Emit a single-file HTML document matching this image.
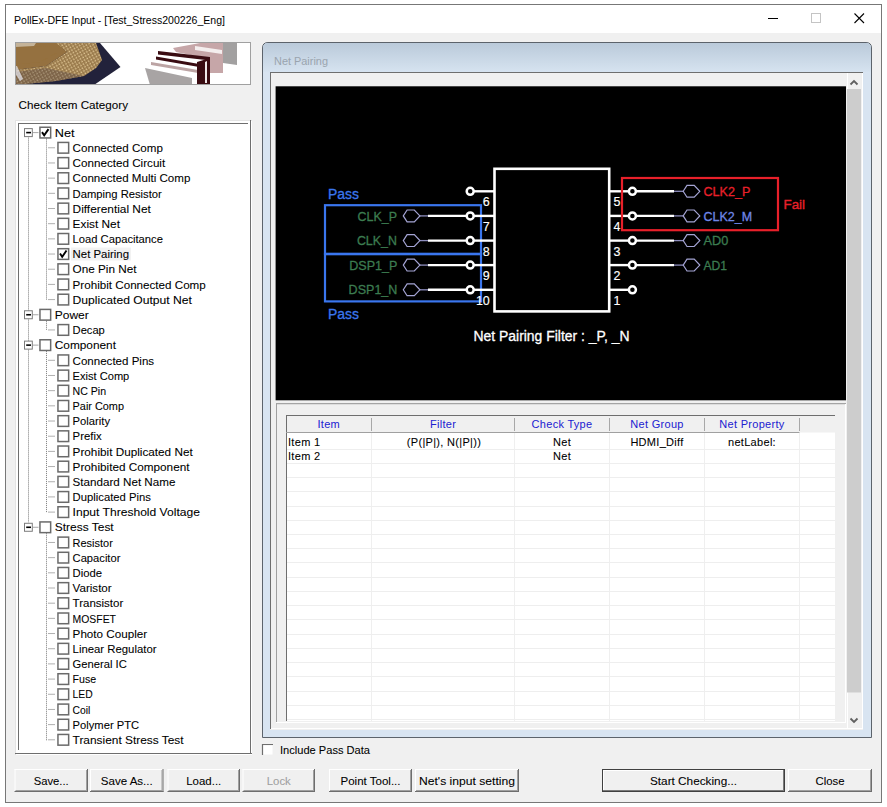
<!DOCTYPE html>
<html><head><meta charset="utf-8"><style>html,body{margin:0;padding:0;background:#fff;width:887px;height:807px;overflow:hidden}svg{display:block}text{font-family:"Liberation Sans", sans-serif}</style></head>
<body>
<svg width="887" height="807" viewBox="0 0 887 807" font-family='"Liberation Sans", sans-serif'>
<rect x="0" y="0" width="887" height="807" fill="#ffffff" />
<rect x="5" y="4" width="877" height="799" fill="#f0f0f0" />
<rect x="5" y="4" width="877" height="29" fill="#ffffff" />
<rect x="5.5" y="4.5" width="876" height="798" fill="none" stroke="#777777" stroke-width="1" />
<text x="14" y="23.6" font-size="11.6" fill="#000" text-anchor="start" textLength="211" lengthAdjust="spacingAndGlyphs" >PollEx-DFE Input - [Test_Stress200226_Eng]</text>
<line x1="768" y1="18.5" x2="778" y2="18.5" stroke="#000" stroke-width="1" />
<rect x="811.5" y="13.5" width="9" height="9" fill="none" stroke="#c4c4c4" stroke-width="1" />
<line x1="854.5" y1="13.5" x2="864" y2="23" stroke="#000" stroke-width="1.1" />
<line x1="864" y1="13.5" x2="854.5" y2="23" stroke="#000" stroke-width="1.1" />
<defs><pattern id="pins" x="0" y="0" width="3" height="3" patternUnits="userSpaceOnUse" patternTransform="rotate(-30)"><rect width="3" height="3" fill="#8a6c44"/><rect x="0.5" y="0.5" width="1.5" height="1.6" fill="#f0dcae"/></pattern><pattern id="pins2" x="0" y="0" width="3.2" height="3.2" patternUnits="userSpaceOnUse" patternTransform="rotate(35)"><rect width="3.2" height="3.2" fill="#3a3650"/><rect x="0.6" y="0.6" width="1.5" height="1.5" fill="#c8b8a0"/></pattern><filter id="bl" x="-5%" y="-5%" width="110%" height="110%"><feGaussianBlur stdDeviation="0.4"/></filter></defs>
<g>
<rect x="15" y="42" width="236" height="43" fill="#ffffff" />
<g filter="url(#bl)">
<polygon points="15,43 100,43 120.5,67 94,85 15,85" fill="#23233a"/>
<polygon points="55,43 96,43 102,60 96,68 84,76 56,81 15,85 15,70 46,66 67,52" fill="url(#pins)"/>
<polygon points="55,43 96,43 102,60 96,68 84,76 56,81 15,85 15,70 46,66 67,52" fill="#b89458" opacity="0.3"/>
<polygon points="15,72 46,68 84,76 56,81 15,85" fill="#383040" opacity="0.3"/>
<polygon points="15,43 56,43 67,52 46,66 15,70" fill="#95713f"/>
<polygon points="20,48 50,46 58,52 40,62 20,64" fill="#96723f" opacity="0.6"/>
<polygon points="15,43 36,43 34,46 15,47" fill="#d8d0c0" opacity="0.7"/>
<polygon points="15,66 17,66 23,79 20,81 15,73" fill="#e0e0e8" opacity="0.75"/>
</g>
<polygon points="173,48 200,43 223,43 223,73 210,73 210,59 176,52" fill="#c6a6a8"/>
<polygon points="195,46 222,50 222,54 195,50" fill="#f4eeee"/>
<polygon points="223,43 237,43 237,65 223,63" fill="#a2a0a0"/>
<polygon points="145,68 192,78 192,85 150,85" fill="#a8a4a4"/>
<polygon points="151,62 198,70 198,73 151,65" fill="#bca4a4"/>
<polygon points="156,56.5 202,64.5 202,67.5 156,59.5" fill="#3a0c12"/>
<polygon points="158,51 210,57 210,60.5 158,54.5" fill="#3a0c12"/>
<polygon points="197,62 210,58 210,85 197,85" fill="#3a0c12"/>
<polygon points="205,62 207,61 207,83 205,83" fill="#f0e8e8"/>
<rect x="15.5" y="42.5" width="235" height="42" fill="none" stroke="#a0a0a0" stroke-width="1" />
</g>
<text x="18.5" y="109" font-size="11" fill="#000" text-anchor="start" textLength="109.5" lengthAdjust="spacingAndGlyphs" stroke="#000" stroke-width="0.07">Check Item Category</text>
<rect x="15" y="120" width="237" height="635" fill="#ffffff" />
<line x1="15" y1="120.5" x2="252" y2="120.5" stroke="#e3e3e3" stroke-width="1" />
<line x1="15.5" y1="120" x2="15.5" y2="755" stroke="#e3e3e3" stroke-width="1" />
<line x1="15" y1="753.5" x2="252" y2="753.5" stroke="#6e6e6e" stroke-width="1" />
<line x1="250.5" y1="120" x2="250.5" y2="754" stroke="#6e6e6e" stroke-width="1" />
<line x1="18" y1="123.5" x2="248" y2="123.5" stroke="#6e6e6e" stroke-width="1" />
<line x1="18.5" y1="123" x2="18.5" y2="750" stroke="#6e6e6e" stroke-width="1" />
<line x1="28.5" y1="137.6" x2="28.5" y2="522.28" stroke="#7a7a7a" stroke-width="1" stroke-dasharray="1,1"/>
<line x1="46.5" y1="138.6" x2="46.5" y2="300.08" stroke="#7a7a7a" stroke-width="1" stroke-dasharray="1,1"/>
<line x1="46.5" y1="320.76" x2="46.5" y2="330.44" stroke="#7a7a7a" stroke-width="1" stroke-dasharray="1,1"/>
<line x1="46.5" y1="351.12" x2="46.5" y2="512.6" stroke="#7a7a7a" stroke-width="1" stroke-dasharray="1,1"/>
<line x1="46.5" y1="533.28" x2="46.5" y2="740.3000000000001" stroke="#7a7a7a" stroke-width="1" stroke-dasharray="1,1"/>
<rect x="24.5" y="128.6" width="7.8" height="8" fill="#ffffff" stroke="#7c7c7c" stroke-width="1" />
<line x1="26.2" y1="132.6" x2="31" y2="132.6" stroke="#000" stroke-width="1.6" />
<line x1="33" y1="132.6" x2="38.5" y2="132.6" stroke="#a8a8a8" stroke-width="1" />
<rect x="39.95" y="127.25" width="10.7" height="10.7" fill="#ffffff" stroke="#6a6a6a" stroke-width="1.5" />
<polyline points="42.0,132.1 44.2,135.4 48.5,129.1" fill="none" stroke="#000" stroke-width="1.9"/>
<text x="54.8" y="136.79999999999998" font-size="11" fill="#000" text-anchor="start" textLength="19.8" lengthAdjust="spacingAndGlyphs" stroke="#000" stroke-width="0.07">Net</text>
<line x1="48" y1="147.78" x2="55" y2="147.78" stroke="#b0b0b0" stroke-width="1" />
<rect x="57.95" y="142.43" width="10.7" height="10.7" fill="#ffffff" stroke="#6a6a6a" stroke-width="1.5" />
<text x="72.6" y="151.98" font-size="11" fill="#000" text-anchor="start" textLength="90.3" lengthAdjust="spacingAndGlyphs" stroke="#000" stroke-width="0.07">Connected Comp</text>
<line x1="48" y1="162.95999999999998" x2="55" y2="162.95999999999998" stroke="#b0b0b0" stroke-width="1" />
<rect x="57.95" y="157.60999999999999" width="10.7" height="10.7" fill="#ffffff" stroke="#6a6a6a" stroke-width="1.5" />
<text x="72.6" y="167.15999999999997" font-size="11" fill="#000" text-anchor="start" textLength="92.6" lengthAdjust="spacingAndGlyphs" stroke="#000" stroke-width="0.07">Connected Circuit</text>
<line x1="48" y1="178.14" x2="55" y2="178.14" stroke="#b0b0b0" stroke-width="1" />
<rect x="57.95" y="172.79" width="10.7" height="10.7" fill="#ffffff" stroke="#6a6a6a" stroke-width="1.5" />
<text x="72.6" y="182.33999999999997" font-size="11" fill="#000" text-anchor="start" textLength="117.8" lengthAdjust="spacingAndGlyphs" stroke="#000" stroke-width="0.07">Connected Multi Comp</text>
<line x1="48" y1="193.32" x2="55" y2="193.32" stroke="#b0b0b0" stroke-width="1" />
<rect x="57.95" y="187.97" width="10.7" height="10.7" fill="#ffffff" stroke="#6a6a6a" stroke-width="1.5" />
<text x="72.6" y="197.51999999999998" font-size="11" fill="#000" text-anchor="start" textLength="89.2" lengthAdjust="spacingAndGlyphs" stroke="#000" stroke-width="0.07">Damping Resistor</text>
<line x1="48" y1="208.5" x2="55" y2="208.5" stroke="#b0b0b0" stroke-width="1" />
<rect x="57.95" y="203.15" width="10.7" height="10.7" fill="#ffffff" stroke="#6a6a6a" stroke-width="1.5" />
<text x="72.6" y="212.7" font-size="11" fill="#000" text-anchor="start" textLength="78.2" lengthAdjust="spacingAndGlyphs" stroke="#000" stroke-width="0.07">Differential Net</text>
<line x1="48" y1="223.68" x2="55" y2="223.68" stroke="#b0b0b0" stroke-width="1" />
<rect x="57.95" y="218.33" width="10.7" height="10.7" fill="#ffffff" stroke="#6a6a6a" stroke-width="1.5" />
<text x="72.6" y="227.88" font-size="11" fill="#000" text-anchor="start" textLength="47.4" lengthAdjust="spacingAndGlyphs" stroke="#000" stroke-width="0.07">Exist Net</text>
<line x1="48" y1="238.85999999999999" x2="55" y2="238.85999999999999" stroke="#b0b0b0" stroke-width="1" />
<rect x="57.95" y="233.51" width="10.7" height="10.7" fill="#ffffff" stroke="#6a6a6a" stroke-width="1.5" />
<text x="72.6" y="243.05999999999997" font-size="11" fill="#000" text-anchor="start" textLength="90.3" lengthAdjust="spacingAndGlyphs" stroke="#000" stroke-width="0.07">Load Capacitance</text>
<line x1="48" y1="254.04" x2="55" y2="254.04" stroke="#b0b0b0" stroke-width="1" />
<rect x="71" y="247.54" width="60" height="13" fill="#f2f2f2" />
<rect x="57.95" y="248.69" width="10.7" height="10.7" fill="#ffffff" stroke="#6a6a6a" stroke-width="1.5" />
<polyline points="60.0,253.54 62.2,256.84 66.5,250.54" fill="none" stroke="#000" stroke-width="1.9"/>
<text x="72.6" y="258.24" font-size="11" fill="#000" text-anchor="start" textLength="56.4" lengthAdjust="spacingAndGlyphs" stroke="#000" stroke-width="0.07">Net Pairing</text>
<line x1="48" y1="269.22" x2="55" y2="269.22" stroke="#b0b0b0" stroke-width="1" />
<rect x="57.95" y="263.87" width="10.7" height="10.7" fill="#ffffff" stroke="#6a6a6a" stroke-width="1.5" />
<text x="72.6" y="273.42" font-size="11" fill="#000" text-anchor="start" textLength="63.9" lengthAdjust="spacingAndGlyphs" stroke="#000" stroke-width="0.07">One Pin Net</text>
<line x1="48" y1="284.4" x2="55" y2="284.4" stroke="#b0b0b0" stroke-width="1" />
<rect x="57.95" y="279.04999999999995" width="10.7" height="10.7" fill="#ffffff" stroke="#6a6a6a" stroke-width="1.5" />
<text x="72.6" y="288.59999999999997" font-size="11" fill="#000" text-anchor="start" textLength="133.2" lengthAdjust="spacingAndGlyphs" stroke="#000" stroke-width="0.07">Prohibit Connected Comp</text>
<line x1="48" y1="299.58" x2="55" y2="299.58" stroke="#b0b0b0" stroke-width="1" />
<rect x="57.95" y="294.22999999999996" width="10.7" height="10.7" fill="#ffffff" stroke="#6a6a6a" stroke-width="1.5" />
<text x="72.6" y="303.78" font-size="11" fill="#000" text-anchor="start" textLength="119.4" lengthAdjust="spacingAndGlyphs" stroke="#000" stroke-width="0.07">Duplicated Output Net</text>
<rect x="24.5" y="310.76" width="7.8" height="8" fill="#ffffff" stroke="#7c7c7c" stroke-width="1" />
<line x1="26.2" y1="314.76" x2="31" y2="314.76" stroke="#000" stroke-width="1.6" />
<line x1="33" y1="314.76" x2="38.5" y2="314.76" stroke="#a8a8a8" stroke-width="1" />
<rect x="39.95" y="309.40999999999997" width="10.7" height="10.7" fill="#ffffff" stroke="#6a6a6a" stroke-width="1.5" />
<text x="54.8" y="318.96" font-size="11" fill="#000" text-anchor="start" textLength="34.0" lengthAdjust="spacingAndGlyphs" stroke="#000" stroke-width="0.07">Power</text>
<line x1="48" y1="329.94" x2="55" y2="329.94" stroke="#b0b0b0" stroke-width="1" />
<rect x="57.95" y="324.59" width="10.7" height="10.7" fill="#ffffff" stroke="#6a6a6a" stroke-width="1.5" />
<text x="72.6" y="334.14" font-size="11" fill="#000" text-anchor="start" textLength="32.2" lengthAdjust="spacingAndGlyphs" stroke="#000" stroke-width="0.07">Decap</text>
<rect x="24.5" y="341.12" width="7.8" height="8" fill="#ffffff" stroke="#7c7c7c" stroke-width="1" />
<line x1="26.2" y1="345.12" x2="31" y2="345.12" stroke="#000" stroke-width="1.6" />
<line x1="33" y1="345.12" x2="38.5" y2="345.12" stroke="#a8a8a8" stroke-width="1" />
<rect x="39.95" y="339.77" width="10.7" height="10.7" fill="#ffffff" stroke="#6a6a6a" stroke-width="1.5" />
<text x="54.8" y="349.32" font-size="11" fill="#000" text-anchor="start" textLength="61.2" lengthAdjust="spacingAndGlyphs" stroke="#000" stroke-width="0.07">Component</text>
<line x1="48" y1="360.29999999999995" x2="55" y2="360.29999999999995" stroke="#b0b0b0" stroke-width="1" />
<rect x="57.95" y="354.94999999999993" width="10.7" height="10.7" fill="#ffffff" stroke="#6a6a6a" stroke-width="1.5" />
<text x="72.6" y="364.49999999999994" font-size="11" fill="#000" text-anchor="start" textLength="81.5" lengthAdjust="spacingAndGlyphs" stroke="#000" stroke-width="0.07">Connected Pins</text>
<line x1="48" y1="375.48" x2="55" y2="375.48" stroke="#b0b0b0" stroke-width="1" />
<rect x="57.95" y="370.13" width="10.7" height="10.7" fill="#ffffff" stroke="#6a6a6a" stroke-width="1.5" />
<text x="72.6" y="379.68" font-size="11" fill="#000" text-anchor="start" textLength="56.7" lengthAdjust="spacingAndGlyphs" stroke="#000" stroke-width="0.07">Exist Comp</text>
<line x1="48" y1="390.65999999999997" x2="55" y2="390.65999999999997" stroke="#b0b0b0" stroke-width="1" />
<rect x="57.95" y="385.30999999999995" width="10.7" height="10.7" fill="#ffffff" stroke="#6a6a6a" stroke-width="1.5" />
<text x="72.6" y="394.85999999999996" font-size="11" fill="#000" text-anchor="start" textLength="33.5" lengthAdjust="spacingAndGlyphs" stroke="#000" stroke-width="0.07">NC Pin</text>
<line x1="48" y1="405.84000000000003" x2="55" y2="405.84000000000003" stroke="#b0b0b0" stroke-width="1" />
<rect x="57.95" y="400.49" width="10.7" height="10.7" fill="#ffffff" stroke="#6a6a6a" stroke-width="1.5" />
<text x="72.6" y="410.04" font-size="11" fill="#000" text-anchor="start" textLength="51.4" lengthAdjust="spacingAndGlyphs" stroke="#000" stroke-width="0.07">Pair Comp</text>
<line x1="48" y1="421.02" x2="55" y2="421.02" stroke="#b0b0b0" stroke-width="1" />
<rect x="57.95" y="415.66999999999996" width="10.7" height="10.7" fill="#ffffff" stroke="#6a6a6a" stroke-width="1.5" />
<text x="72.6" y="425.21999999999997" font-size="11" fill="#000" text-anchor="start" textLength="37.5" lengthAdjust="spacingAndGlyphs" stroke="#000" stroke-width="0.07">Polarity</text>
<line x1="48" y1="436.20000000000005" x2="55" y2="436.20000000000005" stroke="#b0b0b0" stroke-width="1" />
<rect x="57.95" y="430.85" width="10.7" height="10.7" fill="#ffffff" stroke="#6a6a6a" stroke-width="1.5" />
<text x="72.6" y="440.40000000000003" font-size="11" fill="#000" text-anchor="start" textLength="29.0" lengthAdjust="spacingAndGlyphs" stroke="#000" stroke-width="0.07">Prefix</text>
<line x1="48" y1="451.38" x2="55" y2="451.38" stroke="#b0b0b0" stroke-width="1" />
<rect x="57.95" y="446.03" width="10.7" height="10.7" fill="#ffffff" stroke="#6a6a6a" stroke-width="1.5" />
<text x="72.6" y="455.58" font-size="11" fill="#000" text-anchor="start" textLength="120.1" lengthAdjust="spacingAndGlyphs" stroke="#000" stroke-width="0.07">Prohibit Duplicated Net</text>
<line x1="48" y1="466.55999999999995" x2="55" y2="466.55999999999995" stroke="#b0b0b0" stroke-width="1" />
<rect x="57.95" y="461.2099999999999" width="10.7" height="10.7" fill="#ffffff" stroke="#6a6a6a" stroke-width="1.5" />
<text x="72.6" y="470.75999999999993" font-size="11" fill="#000" text-anchor="start" textLength="116.9" lengthAdjust="spacingAndGlyphs" stroke="#000" stroke-width="0.07">Prohibited Component</text>
<line x1="48" y1="481.74" x2="55" y2="481.74" stroke="#b0b0b0" stroke-width="1" />
<rect x="57.95" y="476.39" width="10.7" height="10.7" fill="#ffffff" stroke="#6a6a6a" stroke-width="1.5" />
<text x="72.6" y="485.94" font-size="11" fill="#000" text-anchor="start" textLength="102.8" lengthAdjust="spacingAndGlyphs" stroke="#000" stroke-width="0.07">Standard Net Name</text>
<line x1="48" y1="496.91999999999996" x2="55" y2="496.91999999999996" stroke="#b0b0b0" stroke-width="1" />
<rect x="57.95" y="491.56999999999994" width="10.7" height="10.7" fill="#ffffff" stroke="#6a6a6a" stroke-width="1.5" />
<text x="72.6" y="501.11999999999995" font-size="11" fill="#000" text-anchor="start" textLength="78.3" lengthAdjust="spacingAndGlyphs" stroke="#000" stroke-width="0.07">Duplicated Pins</text>
<line x1="48" y1="512.1" x2="55" y2="512.1" stroke="#b0b0b0" stroke-width="1" />
<rect x="57.95" y="506.75" width="10.7" height="10.7" fill="#ffffff" stroke="#6a6a6a" stroke-width="1.5" />
<text x="72.6" y="516.3000000000001" font-size="11" fill="#000" text-anchor="start" textLength="127.3" lengthAdjust="spacingAndGlyphs" stroke="#000" stroke-width="0.07">Input Threshold Voltage</text>
<rect x="24.5" y="523.28" width="7.8" height="8" fill="#ffffff" stroke="#7c7c7c" stroke-width="1" />
<line x1="26.2" y1="527.28" x2="31" y2="527.28" stroke="#000" stroke-width="1.6" />
<line x1="33" y1="527.28" x2="38.5" y2="527.28" stroke="#a8a8a8" stroke-width="1" />
<rect x="39.95" y="521.93" width="10.7" height="10.7" fill="#ffffff" stroke="#6a6a6a" stroke-width="1.5" />
<text x="54.8" y="531.48" font-size="11" fill="#000" text-anchor="start" textLength="58.9" lengthAdjust="spacingAndGlyphs" stroke="#000" stroke-width="0.07">Stress Test</text>
<line x1="48" y1="542.46" x2="55" y2="542.46" stroke="#b0b0b0" stroke-width="1" />
<rect x="57.95" y="537.11" width="10.7" height="10.7" fill="#ffffff" stroke="#6a6a6a" stroke-width="1.5" />
<text x="72.6" y="546.6600000000001" font-size="11" fill="#000" text-anchor="start" textLength="40.2" lengthAdjust="spacingAndGlyphs" stroke="#000" stroke-width="0.07">Resistor</text>
<line x1="48" y1="557.64" x2="55" y2="557.64" stroke="#b0b0b0" stroke-width="1" />
<rect x="57.95" y="552.29" width="10.7" height="10.7" fill="#ffffff" stroke="#6a6a6a" stroke-width="1.5" />
<text x="72.6" y="561.84" font-size="11" fill="#000" text-anchor="start" textLength="47.8" lengthAdjust="spacingAndGlyphs" stroke="#000" stroke-width="0.07">Capacitor</text>
<line x1="48" y1="572.8199999999999" x2="55" y2="572.8199999999999" stroke="#b0b0b0" stroke-width="1" />
<rect x="57.95" y="567.4699999999999" width="10.7" height="10.7" fill="#ffffff" stroke="#6a6a6a" stroke-width="1.5" />
<text x="72.6" y="577.02" font-size="11" fill="#000" text-anchor="start" textLength="29.5" lengthAdjust="spacingAndGlyphs" stroke="#000" stroke-width="0.07">Diode</text>
<line x1="48" y1="588.0" x2="55" y2="588.0" stroke="#b0b0b0" stroke-width="1" />
<rect x="57.95" y="582.65" width="10.7" height="10.7" fill="#ffffff" stroke="#6a6a6a" stroke-width="1.5" />
<text x="72.6" y="592.2" font-size="11" fill="#000" text-anchor="start" textLength="39.1" lengthAdjust="spacingAndGlyphs" stroke="#000" stroke-width="0.07">Varistor</text>
<line x1="48" y1="603.18" x2="55" y2="603.18" stroke="#b0b0b0" stroke-width="1" />
<rect x="57.95" y="597.8299999999999" width="10.7" height="10.7" fill="#ffffff" stroke="#6a6a6a" stroke-width="1.5" />
<text x="72.6" y="607.38" font-size="11" fill="#000" text-anchor="start" textLength="50.7" lengthAdjust="spacingAndGlyphs" stroke="#000" stroke-width="0.07">Transistor</text>
<line x1="48" y1="618.36" x2="55" y2="618.36" stroke="#b0b0b0" stroke-width="1" />
<rect x="57.95" y="613.01" width="10.7" height="10.7" fill="#ffffff" stroke="#6a6a6a" stroke-width="1.5" />
<text x="72.6" y="622.5600000000001" font-size="11" fill="#000" text-anchor="start" textLength="43.4" lengthAdjust="spacingAndGlyphs" stroke="#000" stroke-width="0.07">MOSFET</text>
<line x1="48" y1="633.54" x2="55" y2="633.54" stroke="#b0b0b0" stroke-width="1" />
<rect x="57.95" y="628.1899999999999" width="10.7" height="10.7" fill="#ffffff" stroke="#6a6a6a" stroke-width="1.5" />
<text x="72.6" y="637.74" font-size="11" fill="#000" text-anchor="start" textLength="74.6" lengthAdjust="spacingAndGlyphs" stroke="#000" stroke-width="0.07">Photo Coupler</text>
<line x1="48" y1="648.72" x2="55" y2="648.72" stroke="#b0b0b0" stroke-width="1" />
<rect x="57.95" y="643.37" width="10.7" height="10.7" fill="#ffffff" stroke="#6a6a6a" stroke-width="1.5" />
<text x="72.6" y="652.9200000000001" font-size="11" fill="#000" text-anchor="start" textLength="83.9" lengthAdjust="spacingAndGlyphs" stroke="#000" stroke-width="0.07">Linear Regulator</text>
<line x1="48" y1="663.9" x2="55" y2="663.9" stroke="#b0b0b0" stroke-width="1" />
<rect x="57.95" y="658.55" width="10.7" height="10.7" fill="#ffffff" stroke="#6a6a6a" stroke-width="1.5" />
<text x="72.6" y="668.1" font-size="11" fill="#000" text-anchor="start" textLength="54.2" lengthAdjust="spacingAndGlyphs" stroke="#000" stroke-width="0.07">General IC</text>
<line x1="48" y1="679.08" x2="55" y2="679.08" stroke="#b0b0b0" stroke-width="1" />
<rect x="57.95" y="673.73" width="10.7" height="10.7" fill="#ffffff" stroke="#6a6a6a" stroke-width="1.5" />
<text x="72.6" y="683.2800000000001" font-size="11" fill="#000" text-anchor="start" textLength="23.6" lengthAdjust="spacingAndGlyphs" stroke="#000" stroke-width="0.07">Fuse</text>
<line x1="48" y1="694.26" x2="55" y2="694.26" stroke="#b0b0b0" stroke-width="1" />
<rect x="57.95" y="688.91" width="10.7" height="10.7" fill="#ffffff" stroke="#6a6a6a" stroke-width="1.5" />
<text x="72.6" y="698.46" font-size="11" fill="#000" text-anchor="start" textLength="20.1" lengthAdjust="spacingAndGlyphs" stroke="#000" stroke-width="0.07">LED</text>
<line x1="48" y1="709.44" x2="55" y2="709.44" stroke="#b0b0b0" stroke-width="1" />
<rect x="57.95" y="704.09" width="10.7" height="10.7" fill="#ffffff" stroke="#6a6a6a" stroke-width="1.5" />
<text x="72.6" y="713.6400000000001" font-size="11" fill="#000" text-anchor="start" textLength="17.8" lengthAdjust="spacingAndGlyphs" stroke="#000" stroke-width="0.07">Coil</text>
<line x1="48" y1="724.62" x2="55" y2="724.62" stroke="#b0b0b0" stroke-width="1" />
<rect x="57.95" y="719.27" width="10.7" height="10.7" fill="#ffffff" stroke="#6a6a6a" stroke-width="1.5" />
<text x="72.6" y="728.82" font-size="11" fill="#000" text-anchor="start" textLength="66.5" lengthAdjust="spacingAndGlyphs" stroke="#000" stroke-width="0.07">Polymer PTC</text>
<line x1="48" y1="739.8000000000001" x2="55" y2="739.8000000000001" stroke="#b0b0b0" stroke-width="1" />
<rect x="57.95" y="734.45" width="10.7" height="10.7" fill="#ffffff" stroke="#6a6a6a" stroke-width="1.5" />
<text x="72.6" y="744.0000000000001" font-size="11" fill="#000" text-anchor="start" textLength="111.0" lengthAdjust="spacingAndGlyphs" stroke="#000" stroke-width="0.07">Transient Stress Test</text>
<defs><linearGradient id="gb" x1="0" y1="0" x2="0" y2="1"><stop offset="0" stop-color="#b8c8d8"/><stop offset="0.06" stop-color="#d4e0ec"/><stop offset="1" stop-color="#d8e4f2"/></linearGradient><linearGradient id="gh" x1="0" y1="0" x2="0" y2="1"><stop offset="0" stop-color="#bacada"/><stop offset="1" stop-color="#d6e3f0"/></linearGradient></defs>
<path d="M262.5,737.5 L262.5,48 Q262.5,42.5 268,42.5 L866,42.5 Q871.5,42.5 871.5,48 L871.5,737.5 Z" fill="#d8e4f1" stroke="#5c636b" stroke-width="1"/>
<path d="M263,72 L263,48 Q263,43 268,43 L866,43 Q871,43 871,48 L871,72 Z" fill="url(#gh)"/>
<text x="274" y="64.5" font-size="11" fill="#9aa4ae" text-anchor="start" textLength="54" lengthAdjust="spacingAndGlyphs" >Net Pairing</text>
<rect x="270" y="72" width="593" height="658" fill="#f0f0f0" />
<line x1="270" y1="72.5" x2="863" y2="72.5" stroke="#6e6e6e" stroke-width="1" />
<line x1="270.5" y1="72" x2="270.5" y2="729" stroke="#6e6e6e" stroke-width="1" />
<line x1="271" y1="728.5" x2="863" y2="728.5" stroke="#ffffff" stroke-width="1" />
<line x1="862.5" y1="73" x2="862.5" y2="729" stroke="#ffffff" stroke-width="1" />
<rect x="275.6" y="86.3" width="570.4" height="314" fill="#000000" />
<g>
<rect x="325" y="205.2" width="156" height="48.6" fill="none" stroke="#3a76ee" stroke-width="2.2" />
<rect x="325" y="254.2" width="156" height="47.2" fill="none" stroke="#3a76ee" stroke-width="2.2" />
<rect x="494.5" y="168.8" width="114.7" height="142.6" fill="none" stroke="#ffffff" stroke-width="2.6" />
<line x1="473.5" y1="191.3" x2="494.5" y2="191.3" stroke="#ffffff" stroke-width="2.4" />
<circle cx="470.2" cy="191.3" r="3.5" fill="#000" stroke="#ffffff" stroke-width="2.5"/>
<line x1="473.5" y1="215.9" x2="494.5" y2="215.9" stroke="#ffffff" stroke-width="2.4" />
<line x1="428" y1="215.9" x2="466.5" y2="215.9" stroke="#ffffff" stroke-width="2.4" />
<line x1="419.8" y1="215.9" x2="428" y2="215.9" stroke="#8c8cbc" stroke-width="1.3" />
<polygon points="403.3,215.9 407.1,210.0 414.3,210.0 419.90000000000003,215.9 414.3,221.8 407.1,221.8" fill="none" stroke="#a4a4d4" stroke-width="1.2"/>
<circle cx="470.2" cy="215.9" r="3.5" fill="#000" stroke="#ffffff" stroke-width="2.5"/>
<line x1="473.5" y1="240.6" x2="494.5" y2="240.6" stroke="#ffffff" stroke-width="2.4" />
<line x1="428" y1="240.6" x2="466.5" y2="240.6" stroke="#ffffff" stroke-width="2.4" />
<line x1="419.8" y1="240.6" x2="428" y2="240.6" stroke="#8c8cbc" stroke-width="1.3" />
<polygon points="403.3,240.6 407.1,234.7 414.3,234.7 419.90000000000003,240.6 414.3,246.5 407.1,246.5" fill="none" stroke="#a4a4d4" stroke-width="1.2"/>
<circle cx="470.2" cy="240.6" r="3.5" fill="#000" stroke="#ffffff" stroke-width="2.5"/>
<line x1="473.5" y1="265.1" x2="494.5" y2="265.1" stroke="#ffffff" stroke-width="2.4" />
<line x1="428" y1="265.1" x2="466.5" y2="265.1" stroke="#ffffff" stroke-width="2.4" />
<line x1="419.8" y1="265.1" x2="428" y2="265.1" stroke="#8c8cbc" stroke-width="1.3" />
<polygon points="403.3,265.1 407.1,259.20000000000005 414.3,259.20000000000005 419.90000000000003,265.1 414.3,271.0 407.1,271.0" fill="none" stroke="#a4a4d4" stroke-width="1.2"/>
<circle cx="470.2" cy="265.1" r="3.5" fill="#000" stroke="#ffffff" stroke-width="2.5"/>
<line x1="473.5" y1="289.8" x2="494.5" y2="289.8" stroke="#ffffff" stroke-width="2.4" />
<line x1="428" y1="289.8" x2="466.5" y2="289.8" stroke="#ffffff" stroke-width="2.4" />
<line x1="419.8" y1="289.8" x2="428" y2="289.8" stroke="#8c8cbc" stroke-width="1.3" />
<polygon points="403.3,289.8 407.1,283.90000000000003 414.3,283.90000000000003 419.90000000000003,289.8 414.3,295.7 407.1,295.7" fill="none" stroke="#a4a4d4" stroke-width="1.2"/>
<circle cx="470.2" cy="289.8" r="3.5" fill="#000" stroke="#ffffff" stroke-width="2.5"/>
<text x="357.5" y="220.5" font-size="13" fill="#3c7c50" text-anchor="start" textLength="39.5" lengthAdjust="spacingAndGlyphs" stroke="#3c7c50" stroke-width="0.3">CLK_P</text>
<text x="356.9" y="245.2" font-size="13" fill="#3c7c50" text-anchor="start" textLength="40" lengthAdjust="spacingAndGlyphs" stroke="#3c7c50" stroke-width="0.3">CLK_N</text>
<text x="349.2" y="269.70000000000005" font-size="13" fill="#3c7c50" text-anchor="start" textLength="48.2" lengthAdjust="spacingAndGlyphs" stroke="#3c7c50" stroke-width="0.3">DSP1_P</text>
<text x="348.6" y="294.40000000000003" font-size="13" fill="#3c7c50" text-anchor="start" textLength="48.8" lengthAdjust="spacingAndGlyphs" stroke="#3c7c50" stroke-width="0.3">DSP1_N</text>
<text x="489.8" y="206.20000000000002" font-size="12.5" fill="#ffffff" text-anchor="end" stroke="#fff" stroke-width="0.15">6</text>
<text x="489.8" y="230.8" font-size="12.5" fill="#ffffff" text-anchor="end" stroke="#fff" stroke-width="0.15">7</text>
<text x="489.8" y="255.5" font-size="12.5" fill="#ffffff" text-anchor="end" stroke="#fff" stroke-width="0.15">8</text>
<text x="489.8" y="280.0" font-size="12.5" fill="#ffffff" text-anchor="end" stroke="#fff" stroke-width="0.15">9</text>
<text x="489.8" y="304.7" font-size="12.5" fill="#ffffff" text-anchor="end" stroke="#fff" stroke-width="0.15">10</text>
<text x="328" y="198.6" font-size="14" fill="#3a76ee" text-anchor="start" textLength="31" lengthAdjust="spacingAndGlyphs" stroke="#3a76ee" stroke-width="0.3">Pass</text>
<text x="328" y="319.2" font-size="14" fill="#3a76ee" text-anchor="start" textLength="31" lengthAdjust="spacingAndGlyphs" stroke="#3a76ee" stroke-width="0.3">Pass</text>
<line x1="609.2" y1="191.3" x2="629" y2="191.3" stroke="#ffffff" stroke-width="2.4" />
<circle cx="632.4" cy="191.3" r="3.5" fill="#000" stroke="#ffffff" stroke-width="2.5"/>
<line x1="636" y1="191.3" x2="674" y2="191.3" stroke="#ffffff" stroke-width="2.4" />
<line x1="674" y1="191.3" x2="683.3" y2="191.3" stroke="#8c8cbc" stroke-width="1.3" />
<polygon points="683.2,191.3 687.0,185.4 694.2,185.4 699.8000000000001,191.3 694.2,197.20000000000002 687.0,197.20000000000002" fill="none" stroke="#a4a4d4" stroke-width="1.2"/>
<line x1="609.2" y1="215.9" x2="629" y2="215.9" stroke="#ffffff" stroke-width="2.4" />
<circle cx="632.4" cy="215.9" r="3.5" fill="#000" stroke="#ffffff" stroke-width="2.5"/>
<line x1="636" y1="215.9" x2="674" y2="215.9" stroke="#ffffff" stroke-width="2.4" />
<line x1="674" y1="215.9" x2="683.3" y2="215.9" stroke="#8c8cbc" stroke-width="1.3" />
<polygon points="683.2,215.9 687.0,210.0 694.2,210.0 699.8000000000001,215.9 694.2,221.8 687.0,221.8" fill="none" stroke="#a4a4d4" stroke-width="1.2"/>
<line x1="609.2" y1="240.6" x2="629" y2="240.6" stroke="#ffffff" stroke-width="2.4" />
<circle cx="632.4" cy="240.6" r="3.5" fill="#000" stroke="#ffffff" stroke-width="2.5"/>
<line x1="636" y1="240.6" x2="674" y2="240.6" stroke="#ffffff" stroke-width="2.4" />
<line x1="674" y1="240.6" x2="683.3" y2="240.6" stroke="#8c8cbc" stroke-width="1.3" />
<polygon points="683.2,240.6 687.0,234.7 694.2,234.7 699.8000000000001,240.6 694.2,246.5 687.0,246.5" fill="none" stroke="#a4a4d4" stroke-width="1.2"/>
<line x1="609.2" y1="265.1" x2="629" y2="265.1" stroke="#ffffff" stroke-width="2.4" />
<circle cx="632.4" cy="265.1" r="3.5" fill="#000" stroke="#ffffff" stroke-width="2.5"/>
<line x1="636" y1="265.1" x2="674" y2="265.1" stroke="#ffffff" stroke-width="2.4" />
<line x1="674" y1="265.1" x2="683.3" y2="265.1" stroke="#8c8cbc" stroke-width="1.3" />
<polygon points="683.2,265.1 687.0,259.20000000000005 694.2,259.20000000000005 699.8000000000001,265.1 694.2,271.0 687.0,271.0" fill="none" stroke="#a4a4d4" stroke-width="1.2"/>
<line x1="609.2" y1="289.8" x2="629" y2="289.8" stroke="#ffffff" stroke-width="2.4" />
<circle cx="632.4" cy="289.8" r="3.5" fill="#000" stroke="#ffffff" stroke-width="2.5"/>
<text x="613.6" y="206.20000000000002" font-size="12.5" fill="#ffffff" text-anchor="start" stroke="#fff" stroke-width="0.15">5</text>
<text x="613.6" y="230.8" font-size="12.5" fill="#ffffff" text-anchor="start" stroke="#fff" stroke-width="0.15">4</text>
<text x="613.6" y="255.5" font-size="12.5" fill="#ffffff" text-anchor="start" stroke="#fff" stroke-width="0.15">3</text>
<text x="613.6" y="280.0" font-size="12.5" fill="#ffffff" text-anchor="start" stroke="#fff" stroke-width="0.15">2</text>
<text x="613.6" y="304.7" font-size="12.5" fill="#ffffff" text-anchor="start" stroke="#fff" stroke-width="0.15">1</text>
<text x="703.5" y="195.9" font-size="13" fill="#e8202a" text-anchor="start" textLength="46.8" lengthAdjust="spacingAndGlyphs" stroke="#e8202a" stroke-width="0.3">CLK2_P</text>
<text x="703.5" y="220.5" font-size="13" fill="#6f86e6" text-anchor="start" textLength="48.6" lengthAdjust="spacingAndGlyphs" stroke="#6f86e6" stroke-width="0.3">CLK2_M</text>
<text x="703.5" y="245.2" font-size="13" fill="#3c7c50" text-anchor="start" textLength="24.8" lengthAdjust="spacingAndGlyphs" stroke="#3c7c50" stroke-width="0.3">AD0</text>
<text x="703.5" y="269.70000000000005" font-size="13" fill="#3c7c50" text-anchor="start" textLength="23.6" lengthAdjust="spacingAndGlyphs" stroke="#3c7c50" stroke-width="0.3">AD1</text>
<rect x="622" y="178" width="156" height="52.2" fill="none" stroke="#e8202a" stroke-width="2.2" />
<text x="783.5" y="208.6" font-size="13" fill="#e8202a" text-anchor="start" textLength="21.5" lengthAdjust="spacingAndGlyphs" stroke="#e8202a" stroke-width="0.35">Fail</text>
<text x="473.5" y="341.4" font-size="14" fill="#ffffff" text-anchor="start" textLength="156" lengthAdjust="spacingAndGlyphs" stroke="#fff" stroke-width="0.3">Net Pairing Filter : _P, _N</text>
</g>
<line x1="276" y1="403.6" x2="846" y2="403.6" stroke="#a4a4a4" stroke-width="1.3" />
<line x1="276.5" y1="403" x2="276.5" y2="723" stroke="#a0a0a0" stroke-width="1" />
<line x1="276" y1="722.5" x2="846" y2="722.5" stroke="#ffffff" stroke-width="1" />
<line x1="845.5" y1="404" x2="845.5" y2="723" stroke="#ffffff" stroke-width="1" />
<rect x="847" y="73" width="14" height="655" fill="#f0f0f0" />
<line x1="847.5" y1="73" x2="847.5" y2="728" stroke="#ffffff" stroke-width="1" />
<rect x="847" y="89" width="14" height="603.5" fill="#cdcdcd" />
<polyline points="850.5,84.5 854,81 857.5,84.5" fill="none" stroke="#606060" stroke-width="1.8"/>
<polyline points="850.5,718.5 854,722 857.5,718.5" fill="none" stroke="#606060" stroke-width="1.8"/>
<rect x="286" y="415" width="549" height="306" fill="#ffffff" />
<rect x="286" y="415" width="549" height="17.5" fill="#f0f0f0" />
<line x1="286" y1="415.5" x2="835" y2="415.5" stroke="#6e6e6e" stroke-width="1" />
<line x1="286.5" y1="415" x2="286.5" y2="721" stroke="#6e6e6e" stroke-width="1" />
<line x1="371.5" y1="418" x2="371.5" y2="431" stroke="#a8a8a8" stroke-width="1" />
<line x1="371.5" y1="433" x2="371.5" y2="721" stroke="#efefef" stroke-width="1" />
<line x1="514.5" y1="418" x2="514.5" y2="431" stroke="#a8a8a8" stroke-width="1" />
<line x1="514.5" y1="433" x2="514.5" y2="721" stroke="#efefef" stroke-width="1" />
<line x1="609.5" y1="418" x2="609.5" y2="431" stroke="#a8a8a8" stroke-width="1" />
<line x1="609.5" y1="433" x2="609.5" y2="721" stroke="#efefef" stroke-width="1" />
<line x1="704.5" y1="418" x2="704.5" y2="431" stroke="#a8a8a8" stroke-width="1" />
<line x1="704.5" y1="433" x2="704.5" y2="721" stroke="#efefef" stroke-width="1" />
<line x1="799.5" y1="418" x2="799.5" y2="431" stroke="#a8a8a8" stroke-width="1" />
<line x1="799.5" y1="433" x2="799.5" y2="721" stroke="#efefef" stroke-width="1" />
<line x1="286" y1="432.5" x2="799.5" y2="432.5" stroke="#a0a0a0" stroke-width="1" />
<line x1="287" y1="449.5" x2="835" y2="449.5" stroke="#eeeeee" stroke-width="1" />
<line x1="287" y1="463.5" x2="835" y2="463.5" stroke="#eeeeee" stroke-width="1" />
<line x1="287" y1="477.5" x2="835" y2="477.5" stroke="#eeeeee" stroke-width="1" />
<line x1="287" y1="491.5" x2="835" y2="491.5" stroke="#eeeeee" stroke-width="1" />
<line x1="287" y1="506.5" x2="835" y2="506.5" stroke="#eeeeee" stroke-width="1" />
<line x1="287" y1="520.5" x2="835" y2="520.5" stroke="#eeeeee" stroke-width="1" />
<line x1="287" y1="534.5" x2="835" y2="534.5" stroke="#eeeeee" stroke-width="1" />
<line x1="287" y1="548.5" x2="835" y2="548.5" stroke="#eeeeee" stroke-width="1" />
<line x1="287" y1="562.5" x2="835" y2="562.5" stroke="#eeeeee" stroke-width="1" />
<line x1="287" y1="577.5" x2="835" y2="577.5" stroke="#eeeeee" stroke-width="1" />
<line x1="287" y1="591.5" x2="835" y2="591.5" stroke="#eeeeee" stroke-width="1" />
<line x1="287" y1="605.5" x2="835" y2="605.5" stroke="#eeeeee" stroke-width="1" />
<line x1="287" y1="619.5" x2="835" y2="619.5" stroke="#eeeeee" stroke-width="1" />
<line x1="287" y1="634.5" x2="835" y2="634.5" stroke="#eeeeee" stroke-width="1" />
<line x1="287" y1="648.5" x2="835" y2="648.5" stroke="#eeeeee" stroke-width="1" />
<line x1="287" y1="662.5" x2="835" y2="662.5" stroke="#eeeeee" stroke-width="1" />
<line x1="287" y1="676.5" x2="835" y2="676.5" stroke="#eeeeee" stroke-width="1" />
<line x1="287" y1="691.5" x2="835" y2="691.5" stroke="#eeeeee" stroke-width="1" />
<line x1="287" y1="705.5" x2="835" y2="705.5" stroke="#eeeeee" stroke-width="1" />
<line x1="287" y1="719.5" x2="835" y2="719.5" stroke="#eeeeee" stroke-width="1" />
<text x="328.75" y="428" font-size="11" fill="#2020d0" text-anchor="middle" letter-spacing="0.3">Item</text>
<text x="443.0" y="428" font-size="11" fill="#2020d0" text-anchor="middle" letter-spacing="0.3">Filter</text>
<text x="562.0" y="428" font-size="11" fill="#2020d0" text-anchor="middle" letter-spacing="0.3">Check Type</text>
<text x="657.0" y="428" font-size="11" fill="#2020d0" text-anchor="middle" letter-spacing="0.3">Net Group</text>
<text x="752.0" y="428" font-size="11" fill="#2020d0" text-anchor="middle" letter-spacing="0.3">Net Property</text>
<text x="288" y="445.6" font-size="11" fill="#000" text-anchor="start" letter-spacing="0.3" stroke="#000" stroke-width="0.07">Item 1</text>
<text x="288" y="460" font-size="11" fill="#000" text-anchor="start" letter-spacing="0.3" stroke="#000" stroke-width="0.07">Item 2</text>
<text x="444" y="445.6" font-size="11" fill="#000" text-anchor="middle" letter-spacing="0.3" stroke="#000" stroke-width="0.07">(P(|P|), N(|P|))</text>
<text x="562" y="445.6" font-size="11" fill="#000" text-anchor="middle" letter-spacing="0.3" stroke="#000" stroke-width="0.07">Net</text>
<text x="562" y="460" font-size="11" fill="#000" text-anchor="middle" letter-spacing="0.3" stroke="#000" stroke-width="0.07">Net</text>
<text x="657" y="445.6" font-size="11" fill="#000" text-anchor="middle" letter-spacing="0.3" stroke="#000" stroke-width="0.07">HDMI_Diff</text>
<text x="752" y="445.6" font-size="11" fill="#000" text-anchor="middle" letter-spacing="0.3" stroke="#000" stroke-width="0.07">netLabel:</text>
<path d="M262.5,755 L262.5,744.5 L273,744.5" fill="none" stroke="#6e6e6e" stroke-width="1.2"/>
<rect x="263.5" y="745.5" width="9" height="9" fill="#ffffff" />
<text x="280" y="754.2" font-size="11" fill="#000" text-anchor="start" textLength="90" lengthAdjust="spacingAndGlyphs" stroke="#000" stroke-width="0.07">Include Pass Data</text>
<rect x="14.5" y="769" width="73.5" height="23" fill="#f0f0f0" />
<line x1="14.5" y1="769.5" x2="87" y2="769.5" stroke="#ffffff" stroke-width="1" />
<line x1="15.0" y1="769" x2="15.0" y2="791" stroke="#ffffff" stroke-width="1" />
<line x1="14.5" y1="791.5" x2="88" y2="791.5" stroke="#6e6e6e" stroke-width="1" />
<line x1="87.5" y1="769" x2="87.5" y2="792" stroke="#6e6e6e" stroke-width="1" />
<line x1="15.5" y1="790.5" x2="87" y2="790.5" stroke="#a0a0a0" stroke-width="1" />
<line x1="86.5" y1="770" x2="86.5" y2="791" stroke="#a0a0a0" stroke-width="1" />
<text x="51.25" y="785" font-size="11" fill="#000" text-anchor="middle" textLength="35" lengthAdjust="spacingAndGlyphs" stroke="#000" stroke-width="0.07">Save...</text>
<rect x="90" y="769" width="73.5" height="23" fill="#f0f0f0" />
<line x1="90" y1="769.5" x2="162.5" y2="769.5" stroke="#ffffff" stroke-width="1" />
<line x1="90.5" y1="769" x2="90.5" y2="791" stroke="#ffffff" stroke-width="1" />
<line x1="90" y1="791.5" x2="163.5" y2="791.5" stroke="#6e6e6e" stroke-width="1" />
<line x1="163.0" y1="769" x2="163.0" y2="792" stroke="#6e6e6e" stroke-width="1" />
<line x1="91" y1="790.5" x2="162.5" y2="790.5" stroke="#a0a0a0" stroke-width="1" />
<line x1="162.0" y1="770" x2="162.0" y2="791" stroke="#a0a0a0" stroke-width="1" />
<text x="126.75" y="785" font-size="11" fill="#000" text-anchor="middle" textLength="52" lengthAdjust="spacingAndGlyphs" stroke="#000" stroke-width="0.07">Save As...</text>
<rect x="167.5" y="769" width="72.5" height="23" fill="#f0f0f0" />
<line x1="167.5" y1="769.5" x2="239" y2="769.5" stroke="#ffffff" stroke-width="1" />
<line x1="168.0" y1="769" x2="168.0" y2="791" stroke="#ffffff" stroke-width="1" />
<line x1="167.5" y1="791.5" x2="240" y2="791.5" stroke="#6e6e6e" stroke-width="1" />
<line x1="239.5" y1="769" x2="239.5" y2="792" stroke="#6e6e6e" stroke-width="1" />
<line x1="168.5" y1="790.5" x2="239" y2="790.5" stroke="#a0a0a0" stroke-width="1" />
<line x1="238.5" y1="770" x2="238.5" y2="791" stroke="#a0a0a0" stroke-width="1" />
<text x="203.75" y="785" font-size="11" fill="#000" text-anchor="middle" textLength="35" lengthAdjust="spacingAndGlyphs" stroke="#000" stroke-width="0.07">Load...</text>
<rect x="242.5" y="769" width="72.5" height="23" fill="#f0f0f0" />
<line x1="242.5" y1="769.5" x2="314" y2="769.5" stroke="#ffffff" stroke-width="1" />
<line x1="243.0" y1="769" x2="243.0" y2="791" stroke="#ffffff" stroke-width="1" />
<line x1="242.5" y1="791.5" x2="315" y2="791.5" stroke="#6e6e6e" stroke-width="1" />
<line x1="314.5" y1="769" x2="314.5" y2="792" stroke="#6e6e6e" stroke-width="1" />
<line x1="243.5" y1="790.5" x2="314" y2="790.5" stroke="#a0a0a0" stroke-width="1" />
<line x1="313.5" y1="770" x2="313.5" y2="791" stroke="#a0a0a0" stroke-width="1" />
<text x="278.75" y="785" font-size="11" fill="#a0a0a0" text-anchor="middle" textLength="24" lengthAdjust="spacingAndGlyphs" stroke="#a0a0a0" stroke-width="0.07">Lock</text>
<rect x="329" y="769" width="83" height="23" fill="#f0f0f0" />
<line x1="329" y1="769.5" x2="411" y2="769.5" stroke="#ffffff" stroke-width="1" />
<line x1="329.5" y1="769" x2="329.5" y2="791" stroke="#ffffff" stroke-width="1" />
<line x1="329" y1="791.5" x2="412" y2="791.5" stroke="#6e6e6e" stroke-width="1" />
<line x1="411.5" y1="769" x2="411.5" y2="792" stroke="#6e6e6e" stroke-width="1" />
<line x1="330" y1="790.5" x2="411" y2="790.5" stroke="#a0a0a0" stroke-width="1" />
<line x1="410.5" y1="770" x2="410.5" y2="791" stroke="#a0a0a0" stroke-width="1" />
<text x="370.5" y="785" font-size="11" fill="#000" text-anchor="middle" textLength="60" lengthAdjust="spacingAndGlyphs" stroke="#000" stroke-width="0.07">Point Tool...</text>
<rect x="415" y="769" width="104" height="23" fill="#f0f0f0" />
<line x1="415" y1="769.5" x2="518" y2="769.5" stroke="#ffffff" stroke-width="1" />
<line x1="415.5" y1="769" x2="415.5" y2="791" stroke="#ffffff" stroke-width="1" />
<line x1="415" y1="791.5" x2="519" y2="791.5" stroke="#6e6e6e" stroke-width="1" />
<line x1="518.5" y1="769" x2="518.5" y2="792" stroke="#6e6e6e" stroke-width="1" />
<line x1="416" y1="790.5" x2="518" y2="790.5" stroke="#a0a0a0" stroke-width="1" />
<line x1="517.5" y1="770" x2="517.5" y2="791" stroke="#a0a0a0" stroke-width="1" />
<text x="467.0" y="785" font-size="11" fill="#000" text-anchor="middle" textLength="96" lengthAdjust="spacingAndGlyphs" stroke="#000" stroke-width="0.07">Net's input setting</text>
<rect x="602" y="769" width="183" height="23" fill="#f0f0f0" />
<rect x="602.5" y="769.5" width="182" height="22" fill="none" stroke="#404040" stroke-width="1" />
<line x1="603" y1="770.5" x2="783" y2="770.5" stroke="#ffffff" stroke-width="1" />
<line x1="603.5" y1="770" x2="603.5" y2="790" stroke="#ffffff" stroke-width="1" />
<line x1="603" y1="790.5" x2="784" y2="790.5" stroke="#7a7a7a" stroke-width="1" />
<line x1="783.5" y1="770" x2="783.5" y2="791" stroke="#7a7a7a" stroke-width="1" />
<text x="693.5" y="785" font-size="11" fill="#000" text-anchor="middle" textLength="87" lengthAdjust="spacingAndGlyphs" stroke="#000" stroke-width="0.07">Start Checking...</text>
<rect x="788" y="769" width="84" height="23" fill="#f0f0f0" />
<line x1="788" y1="769.5" x2="871" y2="769.5" stroke="#ffffff" stroke-width="1" />
<line x1="788.5" y1="769" x2="788.5" y2="791" stroke="#ffffff" stroke-width="1" />
<line x1="788" y1="791.5" x2="872" y2="791.5" stroke="#6e6e6e" stroke-width="1" />
<line x1="871.5" y1="769" x2="871.5" y2="792" stroke="#6e6e6e" stroke-width="1" />
<line x1="789" y1="790.5" x2="871" y2="790.5" stroke="#a0a0a0" stroke-width="1" />
<line x1="870.5" y1="770" x2="870.5" y2="791" stroke="#a0a0a0" stroke-width="1" />
<text x="830.0" y="785" font-size="11" fill="#000" text-anchor="middle" textLength="29" lengthAdjust="spacingAndGlyphs" stroke="#000" stroke-width="0.07">Close</text>
</svg>
</body></html>
